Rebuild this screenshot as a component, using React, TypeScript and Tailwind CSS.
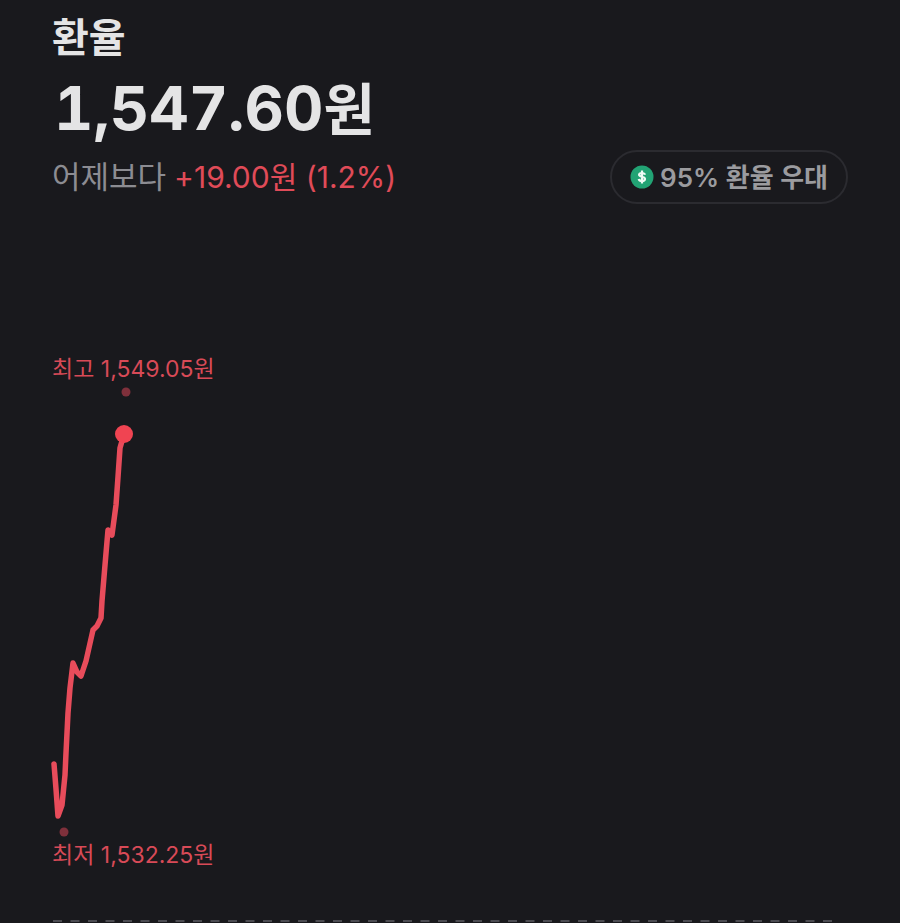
const PRICE_LINE =
  "M2 379 L4 404 L6 431 L10 420 L13 390 L14 368 L16 328 L18 303 L21 278 L25 287 L29 291 L34 276 L41 245 L45 241 L49 233 L50 216 L53 180 L56 145 L60 150 L64 120 L66 92 L68 63 L72 49";

function CoinIcon() {
  return (
    <svg viewBox="0 0 24 24" className="h-6 w-6 shrink-0" aria-hidden="true">
      <circle cx="12" cy="12" r="11.5" fill="#22a374" />
      <path
        d="M15 9.8C14.7 8.6 13.5 8 11.9 8C10.2 8 9.1 8.7 9.1 9.8C9.1 12.5 15 11 15 14C15 15.3 13.8 16 12 16C10.2 16 9 15.3 8.7 14M12 5.6V18.4"
        fill="none"
        stroke="#eefaf5"
        strokeWidth="2.2"
      />
    </svg>
  );
}

function RateChart() {
  return (
    <section className="mt-[149px]" aria-label="환율 차트">
      <p className="text-[23px] leading-8 text-[#d84a57]">최고 1,549.05원</p>
      <svg className="block h-[454px] w-full overflow-visible" aria-hidden="true">
        <circle cx="74" cy="7" r="4.5" fill="#7f303b" />
        <path
          d={PRICE_LINE}
          fill="none"
          stroke="#e84c5b"
          strokeWidth="5.5"
          strokeLinecap="round"
          strokeLinejoin="round"
        />
        <circle cx="72" cy="49" r="9" fill="#f04452" />
        <circle cx="12" cy="447" r="4.5" fill="#7f303b" />
      </svg>
      <p className="text-[23px] leading-8 text-[#d84a57]">최저 1,532.25원</p>
      <svg className="mt-12 block h-1 w-full" aria-hidden="true">
        <line
          x1="1"
          x2="98%"
          y1="2"
          y2="2"
          stroke="#4c4c52"
          strokeWidth="2"
          strokeDasharray="9 8.5"
        />
      </svg>
    </section>
  );
}

export default function App() {
  return (
    <main className="min-h-screen bg-[#19191d] px-[52px] pt-3.5 font-['Inter','Noto_Sans_CJK_KR',sans-serif]">
      <h1 className="text-[40px] leading-[48px] font-bold text-[#e4e4e5]">환율</h1>
      <p className="mt-2.5 pl-0.5 text-[61px] leading-[72px] font-bold text-[#e4e4e5] tabular-nums">
        1,547.60<span className="text-[56px] leading-none">원</span>
      </p>
      <div className="mt-1.5 flex items-center justify-between">
        <p className="flex items-baseline gap-2 text-3xl leading-9">
          <span className="text-[31px] text-[#8c8c92]">어제보다</span>
          <span className="text-[#e04b58]">+19.00원 (1.2%)</span>
        </p>
        <button
          type="button"
          className="flex h-[54px] items-center gap-1.5 rounded-full border-2 border-[#2b2b30] px-[18px] text-[26px] font-semibold text-[#9b9b9f]"
        >
          <CoinIcon />
          <span>95% 환율 우대</span>
        </button>
      </div>
      <RateChart />
    </main>
  );
}
